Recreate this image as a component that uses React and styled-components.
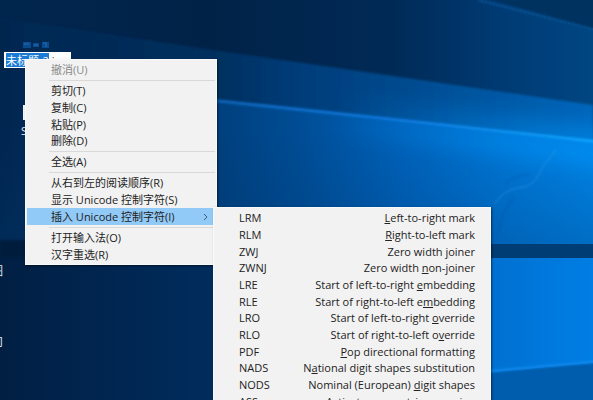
import React, { useEffect, useRef } from "react";
import styled, { createGlobalStyle } from "styled-components";

const GlobalStyle = createGlobalStyle`
  * {
    box-sizing: border-box;
  }
  body {
    margin: 0;
    overflow: hidden;
    background: #01234a;
    font-family: "Open Sans", "Noto Sans CJK SC", sans-serif;
  }
`;

const Desktop = styled.main`
  position: relative;
  height: 100vh;
  overflow: hidden;
`;

const Wallpaper = styled.svg`
  display: block;
  width: 100%;
  height: 100%;
`;

const DesktopItem = styled.div`
  position: absolute;
  left: ${props => props.x}px;
  top: ${props => props.y}px;
  color: #e4ecf4;
  font-size: 11px;
  line-height: 16px;
  white-space: nowrap;
`;

const FileIcon = styled.svg`
  position: absolute;
  left: 22px;
  top: 41px;
`;

const BlankIcon = styled.div`
  width: 24px;
  height: 15px;
  margin: 0 0 3px 2px;
  background: #f4f6f8;
`;

const RenameBox = styled.input`
  position: absolute;
  left: 4px;
  top: 52px;
  width: 67px;
  height: 16px;
  padding: 0 1px;
  border: 1px solid #fff;
  outline: none;
  background: #fff;
  color: #222;
  font-family: inherit;
  font-size: 11px;
  line-height: 14px;

  &::selection {
    background: #1a7ad4;
    color: #fff;
  }
`;

const Menu = styled.div`
  position: absolute;
  left: ${props => props.x}px;
  top: ${props => props.y}px;
  width: ${props => props.w}px;
  padding: 2px 1px 1px;
  border: 1px solid #f9f9f9;
  background: #f2f2f2;
  box-shadow: 1px 1px 2px rgba(0, 0, 0, 0.5);
`;

const Group = styled.div`
  display: grid;
  grid-auto-rows: 16px 17px 17px;

  & + & {
    margin-top: 5px;
    position: relative;
  }
  & + &::before {
    content: "";
    position: absolute;
    top: -3px;
    left: 22px;
    right: 0;
    height: 1px;
    background: #d9d9d9;
  }
`;

const CodeList = styled.div`
  display: grid;
  grid-auto-rows: 16px 17px 17px;
`;

const Item = styled.button`
  display: flex;
  align-items: center;
  justify-content: space-between;
  min-height: 0;
  margin: 0;
  padding: 0 ${props => (props.$wide ? 14 : 5)}px 0 24px;
  border: none;
  background: ${props => (props.$open ? "#91c9f7" : "transparent")};
  color: #222;
  font-family: inherit;
  font-size: 11px;
  line-height: 16px;
  text-align: left;
  white-space: nowrap;

  &:disabled {
    color: #8a8a8a;
  }
`;

const groups = [
  [{ text: "撤消(U)", disabled: true }],
  [{ text: "剪切(T)" }, { text: "复制(C)" }, { text: "粘贴(P)" }, { text: "删除(D)" }],
  [{ text: "全选(A)" }],
  [
    { text: "从右到左的阅读顺序(R)" },
    { text: "显示 Unicode 控制字符(S)" },
    { text: "插入 Unicode 控制字符(I)", open: true }
  ],
  [{ text: "打开输入法(O)" }, { text: "汉字重选(R)" }]
];

// code, text before the access key, access key, text after it
const codes = [
  ["LRM", "", "L", "eft-to-right mark"],
  ["RLM", "", "R", "ight-to-left mark"],
  ["ZWJ", "Zero width ", "j", "oiner"],
  ["ZWNJ", "Zero width ", "n", "on-joiner"],
  ["LRE", "Start of left-to-right ", "e", "mbedding"],
  ["RLE", "Start of right-to-left e", "m", "bedding"],
  ["LRO", "Start of left-to-right ", "o", "verride"],
  ["RLO", "Start of right-to-left o", "v", "erride"],
  ["PDF", "", "P", "op directional formatting"],
  ["NADS", "N", "a", "tional digit shapes substitution"],
  ["NODS", "Nominal (European) ", "d", "igit shapes"],
  ["ASS", "Activate s", "y", "mmetric swapping"]
];

function Background() {
  return (
    <Wallpaper viewBox="0 0 593 400" preserveAspectRatio="none" aria-hidden="true">
      <defs>
        <linearGradient id="sky" x1="0" y1="0" x2="1" y2="0">
          <stop offset="0" stopColor="#01264e" />
          <stop offset="0.35" stopColor="#012247" />
          <stop offset="0.66" stopColor="#002a56" />
          <stop offset="0.85" stopColor="#003b74" />
          <stop offset="1" stopColor="#004682" />
        </linearGradient>
        <linearGradient id="beam" gradientUnits="userSpaceOnUse" x1="0" y1="0" x2="593" y2="0">
          <stop offset="0" stopColor="#012850" />
          <stop offset="0.36" stopColor="#012f5e" />
          <stop offset="0.5" stopColor="#003c78" />
          <stop offset="0.68" stopColor="#004a8e" />
          <stop offset="1" stopColor="#0066ba" />
        </linearGradient>
        <linearGradient id="floor" gradientUnits="userSpaceOnUse" x1="0" y1="0" x2="593" y2="0">
          <stop offset="0" stopColor="#01264f" />
          <stop offset="0.37" stopColor="#00407e" />
          <stop offset="0.5" stopColor="#004c94" />
          <stop offset="0.68" stopColor="#0063bb" />
          <stop offset="0.85" stopColor="#0078d8" />
          <stop offset="1" stopColor="#0086ea" />
        </linearGradient>
        <linearGradient id="shade" x1="0" y1="0" x2="0" y2="1">
          <stop offset="0.3" stopColor="#00356c" stopOpacity="0" />
          <stop offset="1" stopColor="#00356c" stopOpacity="0.3" />
        </linearGradient>
        <linearGradient id="edge" gradientUnits="userSpaceOnUse" x1="200" y1="0" x2="593" y2="0">
          <stop offset="0" stopColor="#0b62b4" />
          <stop offset="0.5" stopColor="#0b78dc" />
          <stop offset="1" stopColor="#0aa4ff" />
        </linearGradient>
        <linearGradient id="shine" gradientUnits="userSpaceOnUse" x1="330" y1="0" x2="593" y2="0">
          <stop offset="0" stopColor="#0096fa" stopOpacity="0" />
          <stop offset="1" stopColor="#0096fa" />
        </linearGradient>
        <linearGradient id="lower" x1="0" y1="0" x2="1" y2="0">
          <stop offset="0" stopColor="#011f43" />
          <stop offset="0.35" stopColor="#002c5c" />
          <stop offset="0.82" stopColor="#0070d0" />
          <stop offset="1" stopColor="#007ee4" />
        </linearGradient>
        <filter id="soft" x="-10%" y="-50%" width="120%" height="200%">
          <feGaussianBlur stdDeviation="1" />
        </filter>
        <filter id="glow" x="-20%" y="-100%" width="140%" height="300%">
          <feGaussianBlur stdDeviation="10" />
        </filter>
      </defs>
      <rect width="593" height="400" fill="url(#sky)" />
      <g filter="url(#soft)">
        <polygon points="478,-4 600,31 600,-4" fill="#00305f" />
        <path d="M478 0L600 31" stroke="#08508f" strokeWidth="2" />
      </g>
      <polygon points="0,18 60,27 213,50 400,77 593,105 593,145 0,145" fill="url(#beam)" filter="url(#soft)" />
      <path d="M330 103L640 141" stroke="url(#shine)" strokeWidth="16" opacity="0.6" filter="url(#glow)" />
      <polygon points="0,78 217,101 390,119 593,142 593,244 0,244" fill="url(#floor)" />
      <polygon points="0,78 217,101 390,119 593,142 593,244 0,244" fill="url(#shade)" />
      <path d="M330 124L640 160" stroke="url(#shine)" strokeWidth="18" opacity="0.7" filter="url(#glow)" />
      <path d="M200 99L390 119L600 142" fill="none" stroke="url(#edge)" strokeWidth="3" filter="url(#soft)" />
      <g fill="none" strokeWidth="2" filter="url(#soft)">
        <path d="M495 204Q502 192 514 189L528 186Q538 180 543 166L556 150" stroke="#4aa6f0" opacity="0.22" />
        <path d="M499 234Q500 220 506 208L514 197" stroke="#0050a0" opacity="0.3" />
        <path d="M505 184Q514 176 530 174" stroke="#0050a0" opacity="0.25" />
      </g>
      <rect y="244" width="593" height="156" fill="url(#lower)" />
      <rect x="480" y="244" width="113" height="14" fill="#003d75" />
      <rect y="240" width="212" height="18" fill="#011c3c" filter="url(#soft)" />
      <polygon points="470,374 593,363 593,400 470,400" fill="#005cac" />
      <path d="M470 373L600 361" stroke="#0a84e8" strokeWidth="3" filter="url(#soft)" />
    </Wallpaper>
  );
}

function App() {
  const nameRef = useRef(null);

  useEffect(() => {
    nameRef.current.focus();
    nameRef.current.setSelectionRange(0, 5);
  }, []);

  return (
    <Desktop>
      <GlobalStyle />
      <Background />
      <FileIcon width="28" height="8" viewBox="0 0 28 8" aria-hidden="true">
        <path d="M1 1h8v6h-8zM11 2h6v4h-6zM20 1h7v6h-7z" fill="#0b4a8c" />
        <path d="M2 3h5M12 4h4M21 2h4M24 3v3" stroke="#226fb8" />
      </FileIcon>
      <DesktopItem x={21} y={105}>
        <BlankIcon />
        S
      </DesktopItem>
      <DesktopItem x={-8} y={263}>图</DesktopItem>
      <DesktopItem x={-8} y={334}>司</DesktopItem>
      <RenameBox ref={nameRef} aria-label="文件名" defaultValue="未标题-2.jpg" spellCheck={false} />
      <Menu x={25} y={59} w={192} role="menu">
        {groups.map((group, i) => (
          <Group key={i} role="group">
            {group.map(item => (
              <Item key={item.text} role="menuitem" disabled={item.disabled} $open={item.open}>
                {item.text}
                {item.open && (
                  <svg width="8" height="8" viewBox="0 0 8 8" fill="none" stroke="#3f5d78" aria-hidden="true">
                    <path d="M2 1l3 3l-3 3" />
                  </svg>
                )}
              </Item>
            ))}
          </Group>
        ))}
      </Menu>
      <Menu x={213} y={207} w={278} role="menu">
        <CodeList>
          {codes.map(([code, before, accessKey, after]) => (
            <Item key={code} role="menuitem" $wide>
              <span>{code}</span>
              <span>
                {before}
                <u>{accessKey}</u>
                {after}
              </span>
            </Item>
          ))}
        </CodeList>
      </Menu>
    </Desktop>
  );
}

export default App;
